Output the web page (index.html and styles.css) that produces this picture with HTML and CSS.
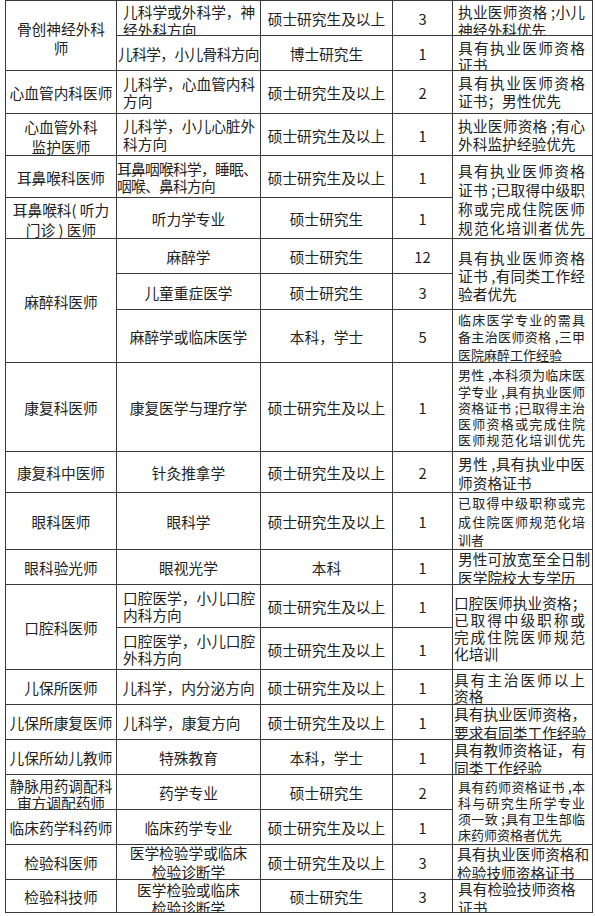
FILE: index.html
```html
<!DOCTYPE html>
<html lang="zh-CN">
<head>
<meta charset="utf-8">
<title>招聘岗位</title>
<link rel="stylesheet" href="styles.css">
</head>
<body>
<div class="grid">
  <!-- row 1 -->
  <div class="c r2 m5 lh19">骨创神经外科<br>师</div>
  <div class="c l m6 lh18">儿科学或外科学，神<br>经外科方向</div>
  <div class="c">硕士研究生及以上</div>
  <div class="c">3</div>
  <div class="c t m6 lh18"><div class="tx"><div class="j">执业医师资格 ;小儿</div><div>神经外科优先</div></div></div>
  <!-- row 2 -->
  <div class="c sq">儿科学，小儿骨科方向</div>
  <div class="c">博士研究生</div>
  <div class="c">1</div>
  <div class="c t m6 lh17"><div class="tx"><div class="j">具有执业医师资格</div><div>证书</div></div></div>
  <!-- row 3 -->
  <div class="c">心血管内科医师</div>
  <div class="c l m0 lh17">儿科学，心血管内科<br>方向</div>
  <div class="c">硕士研究生及以上</div>
  <div class="c">2</div>
  <div class="c t m0 lh18"><div class="tx"><div class="j">具有执业医师资格</div><div>证书；男性优先</div></div></div>
  <!-- row 4 -->
  <div class="c m5 lh20">心血管外科<br>监护医师</div>
  <div class="c l m0 lh18">儿科学，小儿心脏外<br>科方向</div>
  <div class="c">硕士研究生及以上</div>
  <div class="c">1</div>
  <div class="c t m0 lh18"><div class="tx"><div class="j">执业医师资格 ;有心</div><div>外科监护经验优先</div></div></div>
  <!-- row 5 -->
  <div class="c">耳鼻喉科医师</div>
  <div class="c l tl m0 lh17">耳鼻咽喉科学，睡眠、<br>咽喉、鼻科方向</div>
  <div class="c">硕士研究生及以上</div>
  <div class="c">1</div>
  <div class="c t r2 m3 lh19"><div class="tx"><div class="j">具有执业医师资格</div><div class="j">证书 ;已取得中级职</div><div class="j">称或完成住院医师</div><div class="j">规范化培训者优先</div></div></div>
  <!-- row 6 -->
  <div class="c lh20">耳鼻喉科( 听力<br>门诊 ) 医师</div>
  <div class="c">听力学专业</div>
  <div class="c">硕士研究生</div>
  <div class="c">1</div>
  <!-- row 7 -->
  <div class="c r3">麻醉科医师</div>
  <div class="c">麻醉学</div>
  <div class="c">硕士研究生</div>
  <div class="c">12</div>
  <div class="c t r2 m3 lh18"><div class="tx"><div class="j">具有执业医师资格</div><div class="j">证书 ,有同类工作经</div><div>验者优先</div></div></div>
  <!-- row 8 -->
  <div class="c">儿童重症医学</div>
  <div class="c">硕士研究生</div>
  <div class="c">3</div>
  <!-- row 9 -->
  <div class="c">麻醉学或临床医学</div>
  <div class="c">本科，学士</div>
  <div class="c">5</div>
  <div class="c t s lh175"><div class="tx"><div class="j">临床医学专业的需具</div><div class="j">备主治医师资格 ,三甲</div><div>医院麻醉工作经验</div></div></div>
  <!-- row 10 -->
  <div class="c">康复科医师</div>
  <div class="c">康复医学与理疗学</div>
  <div class="c">硕士研究生及以上</div>
  <div class="c">1</div>
  <div class="c t s lh163"><div class="tx"><div class="j">男性 ,本科须为临床医</div><div class="j">学专业 ,具有执业医师</div><div class="j">资格证书 ;已取得主治</div><div class="j">医师资格或完成住院</div><div class="j">医师规范化培训优先</div></div></div>
  <!-- row 11 -->
  <div class="c">康复科中医师</div>
  <div class="c">针灸推拿学</div>
  <div class="c">硕士研究生及以上</div>
  <div class="c">2</div>
  <div class="c t lh19"><div class="tx"><div class="j">男性 ,具有执业中医</div><div>师资格证书</div></div></div>
  <!-- row 12 -->
  <div class="c">眼科医师</div>
  <div class="c">眼科学</div>
  <div class="c">硕士研究生及以上</div>
  <div class="c">1</div>
  <div class="c t s lh185"><div class="tx"><div class="j">已取得中级职称或完</div><div class="j">成住院医师规范化培</div><div>训者</div></div></div>
  <!-- row 13 -->
  <div class="c">眼科验光师</div>
  <div class="c">眼视光学</div>
  <div class="c">本科</div>
  <div class="c">1</div>
  <div class="c t lh19"><div class="tx"><div>男性可放宽至全日制</div><div>医学院校大专学历</div></div></div>
  <!-- row 14 -->
  <div class="c r2">口腔科医师</div>
  <div class="c l m0 lh17">口腔医学，小儿口腔<br>内科方向</div>
  <div class="c">硕士研究生及以上</div>
  <div class="c">1</div>
  <div class="c t p1 r2 lh17"><div class="tx"><div>口腔医师执业资格；</div><div class="j">已取得中级职称或</div><div class="j">完成住院医师规范</div><div>化培训</div></div></div>
  <!-- row 15 -->
  <div class="c l m0 lh17">口腔医学，小儿口腔<br>外科方向</div>
  <div class="c">硕士研究生及以上</div>
  <div class="c">1</div>
  <!-- row 16 -->
  <div class="c">儿保所医师</div>
  <div class="c">儿科学，内分泌方向</div>
  <div class="c">硕士研究生及以上</div>
  <div class="c">1</div>
  <div class="c t p1 lh16"><div class="tx"><div class="j">具有主治医师以上</div><div>资格</div></div></div>
  <!-- row 17 -->
  <div class="c">儿保所康复医师</div>
  <div class="c l">儿科学，康复方向</div>
  <div class="c">硕士研究生及以上</div>
  <div class="c">1</div>
  <div class="c t p1 lh19"><div class="tx"><div>具有执业医师资格，</div><div>要求有同类工作经验</div></div></div>
  <!-- row 18 -->
  <div class="c">儿保所幼儿教师</div>
  <div class="c">特殊教育</div>
  <div class="c">本科，学士</div>
  <div class="c">1</div>
  <div class="c t p1 m3 lh18"><div class="tx"><div>具有教师资格证，有</div><div>同类工作经验</div></div></div>
  <!-- row 19 -->
  <div class="c lh17">静脉用药调配科<br>审方调配药师</div>
  <div class="c">药学专业</div>
  <div class="c">硕士研究生</div>
  <div class="c">2</div>
  <div class="c t s r2 m3 lh16"><div class="tx"><div class="j">具有药师资格证书 ,本</div><div class="j">科与研究生所学专业</div><div class="j">须一致 ;具有卫生部临</div><div>床药师资格者优先</div></div></div>
  <!-- row 20 -->
  <div class="c">临床药学科药师</div>
  <div class="c">临床药学专业</div>
  <div class="c">硕士研究生及以上</div>
  <div class="c">1</div>
  <!-- row 21 -->
  <div class="c">检验科医师</div>
  <div class="c m0 lh19">医学检验学或临床<br>检验诊断学</div>
  <div class="c">硕士研究生及以上</div>
  <div class="c">3</div>
  <div class="c t p4 lh19"><div class="tx"><div>具有执业医师资格和</div><div>检验技师资格证书</div></div></div>
  <!-- row 22 -->
  <div class="c">检验科技师</div>
  <div class="c m6 lh18">医学检验或临床<br>检验诊断学</div>
  <div class="c">硕士研究生</div>
  <div class="c">3</div>
  <div class="c t m3 lh19"><div class="tx"><div>具有检验技师资格</div><div>证书</div></div></div>
</div>
</body>
</html>
```

FILE: styles.css
```css
body {
  margin: 0;
  background: #ffffff;
  font-family: "Noto Sans CJK SC", "Noto Sans", sans-serif;
  color: #222222;
}

.grid {
  display: grid;
  grid-template-columns: 111px 144px 132px 60px 140px;
  grid-template-rows:
    35px 35px 43px 42px 42px 41px 35px 36px 53px 89px 41px
    57px 35px 43px 42px 35px 35px 35px 35px 35px 35px 33px;
  width: max-content;
  margin-left: 5px;
  border-top: 1px solid #3a3a3a;
  border-left: 1px solid #3a3a3a;
}

.c {
  display: flex;
  align-items: center;
  justify-content: center;
  text-align: center;
  min-width: 0;
  min-height: 0;
  overflow: hidden;
  white-space: nowrap;
  border-right: 1px solid #3a3a3a;
  border-bottom: 1px solid #3a3a3a;
  padding-top: 3px;
  font-size: 14.7px;
  line-height: 18.5px;
}

.r2 { grid-row: span 2; }
.r3 { grid-row: span 3; }

/* left aligned column-2 text */
.l {
  justify-content: flex-start;
  text-align: left;
  padding-left: 6px;
}
.tl {
  padding-left: 0;
  letter-spacing: -0.7px;
}
.sq {
  letter-spacing: -0.6px;
}

/* requirement column */
.t {
  justify-content: flex-start;
  text-align: left;
  padding-left: 5px;
  padding-right: 7px;
  padding-top: 2px;
}
.t .tx { width: 100%; }
.t .j {
  white-space: normal;
  text-align: justify;
  text-align-last: justify;
}
.p1 { padding-left: 1px; }
.p4 { padding-left: 4px; }
.s { font-size: 13px; }

/* vertical offsets */
.m0 { padding-top: 0; }
.m3 { padding-top: 3px; }
.m5 { padding-top: 5px; }
.m6 { padding-top: 6px; }

/* line heights */
.lh16 { line-height: 16px; }
.lh163 { line-height: 16.3px; }
.lh17 { line-height: 17px; }
.lh175 { line-height: 17.5px; }
.lh18 { line-height: 18px; }
.lh185 { line-height: 18.5px; }
.lh19 { line-height: 19px; }
.lh20 { line-height: 20px; }
```
